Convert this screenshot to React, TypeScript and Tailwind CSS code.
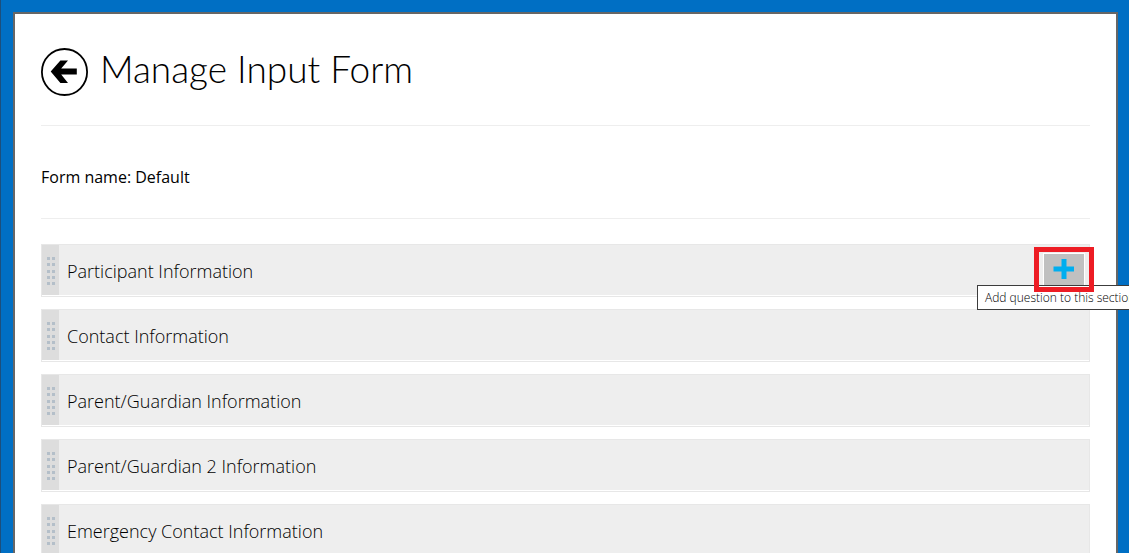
import React from 'react';

interface Section {
  id: string;
  title: string;
  showAdd?: boolean;
}

const sections: Section[] = [
  { id: 'participant', title: 'Participant Information', showAdd: true },
  { id: 'contact', title: 'Contact Information' },
  { id: 'guardian', title: 'Parent/Guardian Information' },
  { id: 'guardian-2', title: 'Parent/Guardian 2 Information' },
  { id: 'emergency', title: 'Emergency Contact Information' },
];

function BackIcon() {
  return (
    <svg width="47" height="48" viewBox="0 0 47 48" fill="none" aria-hidden="true">
      <ellipse cx="23.5" cy="24" rx="22.6" ry="23" stroke="#000" strokeWidth="1.8" />
      <path d="M9.7 23.6 19.4 12.4H27L20.2 20.6H35.8V26.6H20.2L27 34.9H19.4Z" fill="#000" />
    </svg>
  );
}

function DragDots() {
  return (
    <svg width="8" height="28" viewBox="0 0 8 28" fill="#b4bfc9" aria-hidden="true">
      {[0, 6, 13, 19, 25].map((y) => (
        <React.Fragment key={y}>
          <rect x="0" y={y} width="3" height="3" />
          <rect x="5" y={y} width="3" height="3" />
        </React.Fragment>
      ))}
    </svg>
  );
}

function AddButton() {
  return (
    <div className="relative mt-0.5 mr-1">
      <button
        type="button"
        aria-describedby="add-question-tip"
        className="flex h-9 w-[42px] items-center justify-center border border-white bg-[#c0c0c0] pb-1"
        aria-label="Add question"
      >
        <svg width="22" height="20" viewBox="0 0 22 20" fill="#00aeef" aria-hidden="true">
          <path d="M8.5 0h5v7.5H21v5h-7.5V20h-5v-7.5H0.5v-5h8z" />
        </svg>
      </button>
      <span
        id="add-question-tip"
        role="tooltip"
        className="absolute top-8 -left-[66px] z-10 border border-[#3c3c3c] bg-white px-[7px] text-xs leading-[23px] font-light whitespace-nowrap text-black"
      >
        Add question to this section
      </span>
      {/* Highlight around the add button */}
      <div className="pointer-events-none absolute -inset-x-[9px] -top-1.5 z-20 h-[45px] border-5 border-[#ed1c24]" />
    </div>
  );
}

export default function App() {
  return (
    <div className="h-screen overflow-hidden border-l border-[#1c4f7c] bg-[#006fc4] pt-3 pr-[11px] pl-3 font-['Open_Sans',sans-serif] text-black">
      <main className="min-h-screen border-2 border-[#666] bg-white px-[26px] pt-[34px]">
        <header className="flex items-center gap-3 border-b border-[#eee] pb-[29px]">
          <a href="#back" aria-label="Back">
            <BackIcon />
          </a>
          <h1 className="pb-1.5 font-['Lato',sans-serif] text-[37px] leading-10 font-light">Manage Input Form</h1>
        </header>

        <p className="border-b border-[#eee] pt-[37px] pb-[27px] text-base leading-7">Form name: Default</p>

        <ul className="mt-[25px] flex flex-col gap-3">
          {sections.map((section) => (
            <li key={section.id} className="border border-[#e7e7e7] pb-px">
              <div className="flex h-[50px] items-center bg-[#eee]">
                <div className="flex w-[17px] cursor-move items-center justify-center self-stretch bg-[#ddd] pt-0.5 pl-px">
                  <DragDots />
                </div>
                <h2 className="grow px-2 pt-0.5 text-lg leading-6 font-light text-black">{section.title}</h2>
                {section.showAdd && <AddButton />}
              </div>
            </li>
          ))}
        </ul>
      </main>
    </div>
  );
}
